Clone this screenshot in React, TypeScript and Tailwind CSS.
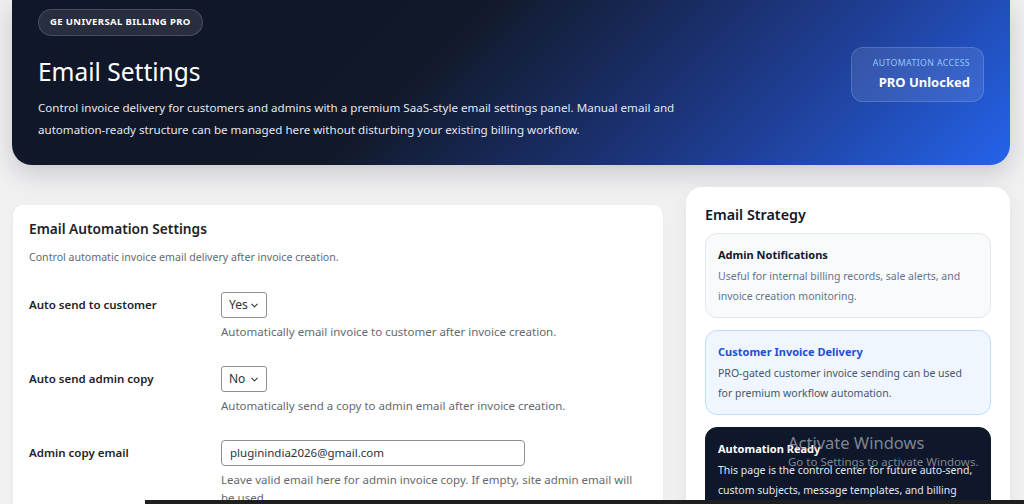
import { ChevronDown } from "lucide-react";

const strategy = [
  {
    title: "Admin Notifications",
    text: "Useful for internal billing records, sale alerts, and invoice creation monitoring.",
    box: "bg-[#f8fafc] border-[#e2e8f0]",
    head: "text-[#0f172a]",
    body: "text-[#64748b]",
  },
  {
    title: "Customer Invoice Delivery",
    text: "PRO-gated customer invoice sending can be used for premium workflow automation.",
    box: "bg-[#eff6ff] border-[#bfdbfe]",
    head: "text-[#1d4ed8]",
    body: "text-[#475569]",
  },
  {
    title: "Automation Ready",
    text: "This page is the control center for future auto-send, custom subjects, message templates, and billing notification workflows.",
    box: "bg-[#0f172a] border-[#0f172a]",
    head: "text-white",
    body: "text-[#e2e8f0]",
  },
];

function FakeSelect({ value }: { value: string }) {
  return (
    <div className="flex h-[26px] w-[46px] items-center justify-between rounded-[3px] border border-[#8c8f94] bg-white pl-[7px] pr-[6px] text-[12px] text-[#2c3338]">
      <span>{value}</span>
      <ChevronDown size={11} strokeWidth={2.2} />
    </div>
  );
}

function Row({ label, help, children }: { label: string; help: string; children: React.ReactNode }) {
  return (
    <div className="grid grid-cols-[192px_1fr] pb-[12px] pt-[13px]">
      <div className="text-[11.5px] font-semibold leading-[26px] text-[#1d2327]">{label}</div>
      <div>
        {children}
        <p className="mt-[5px] max-w-[420px] text-[11.5px] leading-[18px] text-[#646970]">{help}</p>
      </div>
    </div>
  );
}

export default function App() {
  return (
    <div className="relative h-[504px] overflow-hidden bg-[#f0f0f1]" style={{ fontFamily: '"Noto Sans", "Open Sans", sans-serif' }}>
      <header className="ml-[12px] flex h-[165px] w-[998px] items-center justify-between rounded-b-[20px] bg-[linear-gradient(135deg,#0f172a_0%,#111827_40%,#1e3a8a_72%,#2563eb_100%)] px-[26px] pb-[24px] pt-[8px] shadow-[0_8px_24px_rgba(15,23,42,0.18)]">
        <div>
          <div className="flex h-[27px] w-fit items-center rounded-full border border-white/15 bg-white/10 px-[11px] text-[9.5px] font-bold tracking-[0.04em] text-white">
            GE UNIVERSAL BILLING PRO
          </div>
          <h1 className="mt-[20px] text-[24.5px] leading-[32px] text-white">Email Settings</h1>
          <p className="mt-[9px] w-[680px] text-[11.6px] leading-[22px] text-[#e2e8f0]">
            Control invoice delivery for customers and admins with a premium SaaS-style email settings panel. Manual email and automation-ready structure can be managed here without disturbing your existing billing workflow.
          </p>
        </div>
        <div className="flex h-[55px] w-[133px] flex-col items-end justify-center rounded-[12px] border border-white/15 bg-white/10 px-[13px]">
          <span className="whitespace-nowrap text-[8.8px] uppercase tracking-[0.04em] text-[#93c5fd]">Automation Access</span>
          <span className="mt-[3px] whitespace-nowrap text-[13px] font-bold text-white">PRO Unlocked</span>
        </div>
      </header>

      <main className="mt-[22px] grid grid-cols-[650px_324px] items-start gap-[23px] pl-[13px]">
        <section className="mt-[18px] rounded-[10px] bg-white px-[16px] pt-[11px] shadow-[0_1px_3px_rgba(0,0,0,0.06)]">
          <h2 className="text-[13.7px] font-semibold leading-[26px] text-[#1d2327]">Email Automation Settings</h2>
          <p className="mt-[6px] text-[10.6px] leading-[18px] text-[#646970]">Control automatic invoice email delivery after invoice creation.</p>
          <div className="mt-[13px]">
            <Row label="Auto send to customer" help="Automatically email invoice to customer after invoice creation.">
              <FakeSelect value="Yes" />
            </Row>
            <Row label="Auto send admin copy" help="Automatically send a copy to admin email after invoice creation.">
              <FakeSelect value="No" />
            </Row>
            <Row label="Admin copy email" help="Leave valid email here for admin invoice copy. If empty, site admin email will be used.">
              <div className="flex h-[26px] w-[304px] items-center rounded-[4px] border border-[#8c8f94] bg-white px-[8px] text-[11.5px] text-[#2c3338]">
                pluginindia2026@gmail.com
              </div>
            </Row>
          </div>
        </section>

        <aside className="rounded-[16px] bg-white px-[19px] pb-[16px] pt-[17px] shadow-[0_4px_16px_rgba(15,23,42,0.06)]">
          <h2 className="text-[14.3px] font-semibold leading-[22px] text-[#0f172a]">Email Strategy</h2>
          <div className="mt-[7px] flex flex-col gap-[12px]">
            {strategy.map((s) => (
              <div key={s.title} className={`rounded-[12px] border px-[12px] pb-[11px] pt-[13px] ${s.box}`}>
                <h3 className={`text-[11px] font-bold leading-[16px] ${s.head}`}>{s.title}</h3>
                <p className={`mt-[3px] text-[10.5px] leading-[20px] ${s.body}`}>{s.text}</p>
              </div>
            ))}
          </div>
        </aside>
      </main>

      <div className="pointer-events-none absolute left-[788px] top-[432px] text-[#9ca3af]/80">
        <div className="text-[16.5px] leading-[22px]">Activate Windows</div>
        <div className="text-[11.5px] leading-[16px]">Go to Settings to activate Windows.</div>
      </div>

      <div className="absolute bottom-0 left-[145px] right-0 h-[4px] bg-[#1f1f1f]" />
    </div>
  );
}
